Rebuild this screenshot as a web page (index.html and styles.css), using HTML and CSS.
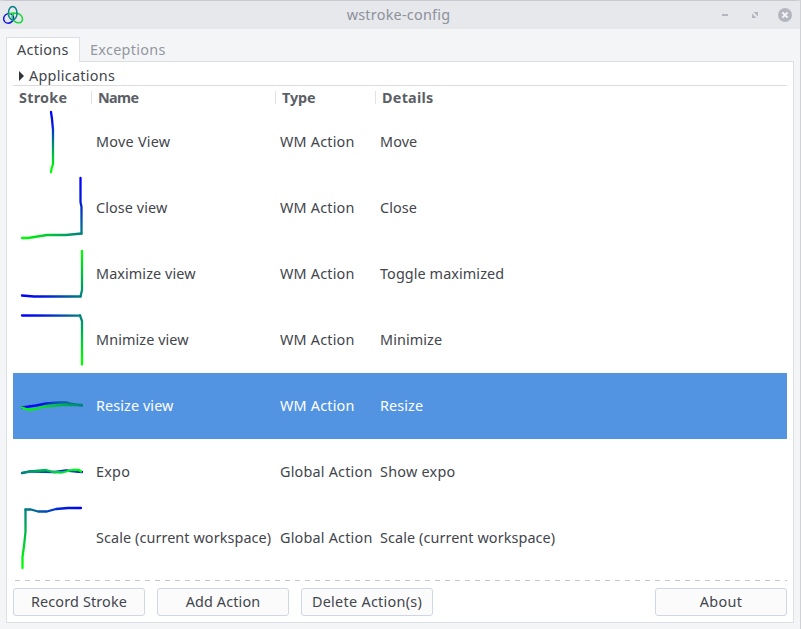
FILE: index.html
```
<!DOCTYPE html>
<html lang="en">
<head>
<meta charset="utf-8">
<title>wstroke-config</title>
<link rel="stylesheet" href="styles.css">
</head>
<body>
<div class="window">
  <header class="titlebar">
    <svg class="logo" width="22" height="22" viewBox="2 4 22 22" fill="none" stroke-width="1.5">
      <ellipse cx="8.6" cy="18.3" rx="5.2" ry="4.6" transform="rotate(-40 8.6 18.3)" stroke="#1616e8"/>
      <ellipse cx="17.3" cy="18" rx="5.6" ry="4.4" transform="rotate(35 17.3 18)" stroke="#16d83c"/>
      <ellipse cx="12.7" cy="13.2" rx="4.3" ry="6.7" stroke="#087f88"/>
      <path d="M8 14.5Q11 12.5 15 13.2" stroke="#16d83c"/>
    </svg>
    <h1 class="title">wstroke-config</h1>
    <svg class="controls" width="80" height="24" viewBox="715 3 80 24">
      <path d="M722 15h6" stroke="#b3b6be" stroke-width="2"/>
      <path d="M753.5 12h4.5v4.5zM752 13.5v4.5h4.5z" fill="#b3b6be"/>
      <circle cx="785" cy="15" r="7" fill="#b3b6be"/>
      <path d="M782.4 12.4l5.2 5.2M787.6 12.4l-5.2 5.2" stroke="#f4f5f7" stroke-width="2"/>
    </svg>
  </header>
  <nav class="tabs">
    <div class="tab active">Actions</div>
    <div class="tab">Exceptions</div>
  </nav>
  <main class="panel">
    <div class="expander"><span class="arrow"></span><span class="label">Applications</span></div>
    <div class="row head">
      <div class="wide">Stroke</div><div class="tight">Name</div><div>Type</div><div class="wide">Details</div>
    </div>
    <div class="row">
      <svg viewBox="13 109 78 66">
        <defs><linearGradient id="a" gradientUnits="userSpaceOnUse" x1="0" y1="112" x2="0" y2="172"><stop stop-color="#00f"/><stop offset=".2" stop-color="#0010ee"/><stop offset=".5" stop-color="#008080"/><stop offset=".95" stop-color="#0f0"/></linearGradient></defs>
        <path stroke="url(#a)" d="M51 112L52 119L53 130V164L51.500 169L51 172"/>
      </svg>
      <div class="wide">Move View</div><div class="type">WM Action</div><div>Move</div>
    </div>
    <div class="row">
      <svg viewBox="13 175 78 66">
        <defs><linearGradient id="b" gradientUnits="userSpaceOnUse" x1="81" y1="178" x2="81" y2="234"><stop stop-color="#00f"/><stop offset=".4" stop-color="#0018dd"/><stop offset="1" stop-color="#008080"/></linearGradient>
        <linearGradient id="c" gradientUnits="userSpaceOnUse" x1="22" y1="0" x2="81" y2="0"><stop stop-color="#0f0"/><stop offset="1" stop-color="#008080"/></linearGradient></defs>
        <path stroke="url(#b)" d="M80.500 178V202L81.500 207V233.500"/>
        <path stroke="url(#c)" d="M22 238H28L47 235H66L81.500 233.500"/>
      </svg>
      <div>Close view</div><div class="type">WM Action</div><div>Close</div>
    </div>
    <div class="row">
      <svg viewBox="13 241 78 66">
        <defs><linearGradient id="d" gradientUnits="userSpaceOnUse" x1="22" y1="0" x2="81" y2="0"><stop stop-color="#00f"/><stop offset=".35" stop-color="#0018dd"/><stop offset="1" stop-color="#008080"/></linearGradient>
        <linearGradient id="e" gradientUnits="userSpaceOnUse" x1="0" y1="297" x2="0" y2="251"><stop stop-color="#008080"/><stop offset="1" stop-color="#0f0"/></linearGradient></defs>
        <path stroke="url(#d)" d="M22 295.500L34 296.500H80.500"/>
        <path stroke="url(#e)" d="M80.500 296.500L82 290V251"/>
      </svg>
      <div>Maximize view</div><div class="type">WM Action</div><div>Toggle maximized</div>
    </div>
    <div class="row">
      <svg viewBox="13 307 78 66">
        <defs><linearGradient id="d2" gradientUnits="userSpaceOnUse" x1="22" y1="0" x2="81" y2="0"><stop stop-color="#00f"/><stop offset=".35" stop-color="#0018dd"/><stop offset="1" stop-color="#008080"/></linearGradient>
        <linearGradient id="f" gradientUnits="userSpaceOnUse" x1="0" y1="315" x2="0" y2="360"><stop stop-color="#008080"/><stop offset="1" stop-color="#0f0"/></linearGradient></defs>
        <path stroke="url(#d2)" d="M22 315.500L79 315.600L80 315.500"/>
        <path stroke="url(#f)" d="M80 315.500L82 321V364.500"/>
      </svg>
      <div>Mnimize view</div><div class="type">WM Action</div><div>Minimize</div>
    </div>
    <div class="row selected">
      <svg viewBox="13 373 78 66">
        <defs><linearGradient id="g" gradientUnits="userSpaceOnUse" x1="22" y1="0" x2="82" y2="0"><stop stop-color="#00f"/><stop offset=".35" stop-color="#0014e0"/><stop offset=".6" stop-color="#0a58b0"/><stop offset="1" stop-color="#008080"/></linearGradient>
        <linearGradient id="h" gradientUnits="userSpaceOnUse" x1="22" y1="0" x2="82" y2="0"><stop stop-color="#0f0"/><stop offset=".25" stop-color="#00ed12"/><stop offset="1" stop-color="#008080"/></linearGradient></defs>
        <path stroke="url(#g)" d="M22 407.500L36 405.500L46 403.500L59 402.500H67L72 404L82 405.500"/>
        <path stroke="url(#h)" d="M22 407.500L28 409.500H33L45 406.500L62 405H82"/>
      </svg>
      <div>Resize view</div><div class="type">WM Action</div><div>Resize</div>
    </div>
    <div class="row">
      <svg viewBox="13 439 78 66">
        <defs><linearGradient id="i" gradientUnits="userSpaceOnUse" x1="22" y1="0" x2="82" y2="0"><stop stop-color="#008080"/><stop offset="1" stop-color="#00f"/></linearGradient>
        <linearGradient id="j" gradientUnits="userSpaceOnUse" x1="22" y1="0" x2="82" y2="0"><stop stop-color="#008080"/><stop offset=".75" stop-color="#0e2"/><stop offset="1" stop-color="#0f0"/></linearGradient></defs>
        <path stroke="url(#i)" d="M22 473L29 471.500L55 472L66 470.500L82 472"/>
        <path stroke="url(#j)" d="M22 473L30 471.500L46 470L53 472L62 472.500L72 470H79L81 471.500"/>
      </svg>
      <div class="wide">Expo</div><div class="type">Global Action</div><div class="wide">Show expo</div>
    </div>
    <div class="row">
      <svg viewBox="13 505 78 66">
        <defs><linearGradient id="k" gradientUnits="userSpaceOnUse" x1="25" y1="0" x2="82" y2="0"><stop stop-color="#008080"/><stop offset=".65" stop-color="#0020e0"/><stop offset="1" stop-color="#00f"/></linearGradient>
        <linearGradient id="l" gradientUnits="userSpaceOnUse" x1="0" y1="509" x2="0" y2="568"><stop stop-color="#008080"/><stop offset=".8" stop-color="#0e1"/><stop offset="1" stop-color="#0f0"/></linearGradient></defs>
        <path stroke="url(#k)" d="M25.500 509.500H31L38 511.500H47L56 509L68 508H81"/>
        <path stroke="url(#l)" d="M25.500 509.500V532L24 546L22.500 557V568"/>
      </svg>
      <div>Scale (current workspace)</div><div class="type">Global Action</div><div>Scale (current workspace)</div>
    </div>
    <div class="divider"></div>
    <footer class="buttons">
      <button>Record Stroke</button><button>Add Action</button><button class="delete">Delete Action(s)</button><button class="about">About</button>
    </footer>
  </main>
</div>
</body>
</html>
```
FILE: styles.css
```
* { box-sizing: border-box; }
body { margin: 0; background: #cfd1d5; overflow: hidden; font: 14.4px/20px "Noto Sans", sans-serif; letter-spacing: 0.09px; color: #42454c; }
.window { width: 800px; height: 629px; background: #f4f5f7; border-radius: 4px 4px 0 0; overflow: hidden; }
.titlebar { height: 29px; background: #e7e8eb; border-top: 1px solid #c8cacf; display: flex; justify-content: space-between; padding: 2px 5px 0 2px; }
.logo { margin-top: 1px; margin-right: 58px; }
.title { margin: 2px 0 0; font-size: 14.4px; line-height: 20px; font-weight: 400; letter-spacing: 0.25px; color: #8c919c; }
.tabs { display: flex; height: 32px; padding: 8px 0 0 6px; letter-spacing: 0.3px; }
.tab { height: 24px; padding: 3px 10px 0; color: #93979f; }
.tab.active { position: relative; height: 25px; width: 74px; background: #fff; border: 1px solid #dcdfe5; border-bottom: 0; color: #42454c; padding-top: 2px; }
.panel { margin-left: 6px; width: 788px; height: 562px; background: #fff; border: 1px solid #dcdfe3; padding: 4px 6px 0; }
.expander { height: 20px; border-bottom: 1px solid #dcdcdc; display: flex; align-items: center; padding-left: 6px; letter-spacing: 0.28px; }
.arrow { border: 5px solid transparent; border-left-color: #2f343b; border-right: 0; margin-right: 5px; }
.label { line-height: 20px; padding-top: 1px; }
.row { display: grid; grid-template-columns: 78px 184px 100px 1fr; height: 66px; align-items: center; white-space: nowrap; }
.row > div { padding-left: 5px; }
.row svg { width: 78px; height: 66px; display: block; fill: none; stroke-width: 2.3; stroke-linecap: round; stroke-linejoin: round; }
.row.head { height: 23px; font-weight: 700; color: #5c5f66; letter-spacing: -0.1px; }
.row.head > div { height: 13px; line-height: 13px; padding-left: 6px; border-left: 1px solid #e2e2e2; }
.row.head > div:first-child { border: 0; }
.row > .wide { letter-spacing: 0.25px; }
.row > .type { letter-spacing: 0.2px; }
.row > .tight { letter-spacing: -0.6px; }
.row.selected { background: #5294e2; color: #fff; }
.divider { height: 1px; margin: 9px 0 7px 2px; background: repeating-linear-gradient(90deg, #c8c8c8 0 5px, transparent 5px 10px); }
.buttons { display: flex; gap: 12px; }
button { width: 132px; height: 28px; padding: 0; background: #fbfbfc; border: 1px solid #cfd6e6; border-radius: 3px; color: #42454c; font: inherit; letter-spacing: 0.15px; }
.delete { letter-spacing: 0.28px; }
.about { margin-left: auto; letter-spacing: 0.3px; }
```
